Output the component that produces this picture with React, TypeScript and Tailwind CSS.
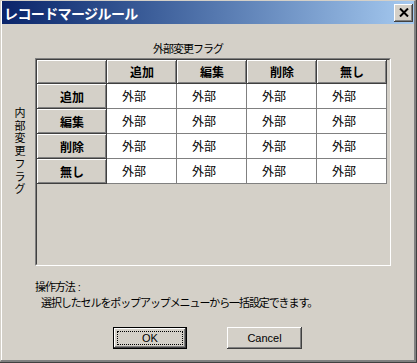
const jp = { fontFamily: '"Noto Sans CJK JP", "Noto Sans", sans-serif' }

const cols = ['追加', '編集', '削除', '無し']

const raised =
  'shadow-[inset_-1px_-1px_0_#404040,inset_1px_1px_0_#ffffff,inset_-2px_-2px_0_#808080]'

const HeadCell = ({ label }: { label?: string }) => (
  <div
    className={`flex h-full items-center justify-center bg-[#d4d0c8] text-[12px] font-bold text-black ${raised}`}
    style={jp}
  >
    {label}
  </div>
)

const App = () => {
  return (
    <div className="h-[363px] w-[417px] overflow-hidden bg-[#404040] pr-[1px] pb-[1px]">
      <div className="flex h-full w-full flex-col border-l border-t border-[#d4d0c8] border-r-2 border-b-2 border-r-[#808080] border-b-[#808080] bg-[#d4d0c8]">
        <div className="flex h-full w-full flex-col border-l border-white">
          {/* title bar */}
          <div className="flex h-[23px] items-center justify-between bg-gradient-to-r from-[#0a246a] to-[#a6caf0] pl-[2px] pr-[1px]">
            <span
              className="text-[14px] leading-none font-bold tracking-[-0.6px] text-white"
              style={jp}
            >
              レコードマージルール
            </span>
            <div
              className={`flex h-[18px] w-[19px] items-center justify-center bg-[#d4d0c8] ${raised}`}
            >
              <svg width="10" height="9" viewBox="0 0 10 9">
                <path d="M1 0.5 L9 8.5 M9 0.5 L1 8.5" stroke="#000" strokeWidth="2" />
              </svg>
            </div>
          </div>

          {/* column label */}
          <div className="mt-[11px] h-[14px] pl-[151px]">
            <span
              className="text-[11px] leading-[14px] tracking-[-1px] text-black"
              style={jp}
            >
              外部変更フラグ
            </span>
          </div>

          <div className="mt-[9px] flex">
            {/* row label */}
            <div className="flex w-[33px] flex-col items-center pt-[48px] pl-[3px] text-[11px] leading-[12.7px] text-black" style={jp}>
              {'内部変更フラグ'.split('').map((c, i) => (
                <div key={i}>{c}</div>
              ))}
            </div>

            {/* grid box */}
            <div className="h-[208px] w-[356px] border border-t-[#808080] border-l-[#808080] border-r-white border-b-white">
              <div className="h-full w-full border border-t-[#404040] border-l-[#404040] border-r-[#d4d0c8] border-b-[#d4d0c8] bg-[#d4d0c8]">
                <div className="grid w-[350px] grid-cols-[70px_70px_70px_70px_70px] grid-rows-[24px_25px_25px_25px_25px]">
                  <HeadCell />
                  {cols.map((c) => (
                    <HeadCell key={c} label={c} />
                  ))}
                  {cols.map((r) => (
                    <>
                      <HeadCell key={r} label={r} />
                      {cols.map((c) => (
                        <div
                          key={r + c}
                          className="flex items-center border-r border-b border-[#808080] bg-white pl-[15px] text-[12px] text-black"
                          style={jp}
                        >
                          外部
                        </div>
                      ))}
                    </>
                  ))}
                </div>
              </div>
            </div>
          </div>

          {/* help text */}
          <div
            className="mt-[13px] pl-[33px] text-[11px] leading-[15px] tracking-[-1.1px] text-black"
            style={jp}
          >
            <div>
              操作方法
              <span
                className="tracking-normal"
                style={{ fontFamily: '"Liberation Sans", Arial, sans-serif' }}
              >
                {' '}:
              </span>
            </div>
            <div className="pl-[6px]">選択したセルをポップアップメニューから一括設定できます。</div>
          </div>

          {/* buttons */}
          <div className="mt-[17px] flex gap-[40px] pl-[111px]">
            <button
              className="h-[22px] w-[74px] border border-black bg-[#d4d0c8] p-0"
              style={{ fontFamily: '"Liberation Sans", Arial, sans-serif' }}
            >
              <div
                className={`flex h-full w-full items-center justify-center p-[3px] ${raised}`}
              >
                <div className="flex h-full w-full items-center justify-center border border-dotted border-black text-[11px] text-black">
                  OK
                </div>
              </div>
            </button>
            <button
              className={`flex h-[22px] w-[75px] items-center justify-center bg-[#d4d0c8] text-[11px] text-black ${raised}`}
              style={{ fontFamily: '"Liberation Sans", Arial, sans-serif' }}
            >
              Cancel
            </button>
          </div>
        </div>
      </div>
    </div>
  )
}

export default App
